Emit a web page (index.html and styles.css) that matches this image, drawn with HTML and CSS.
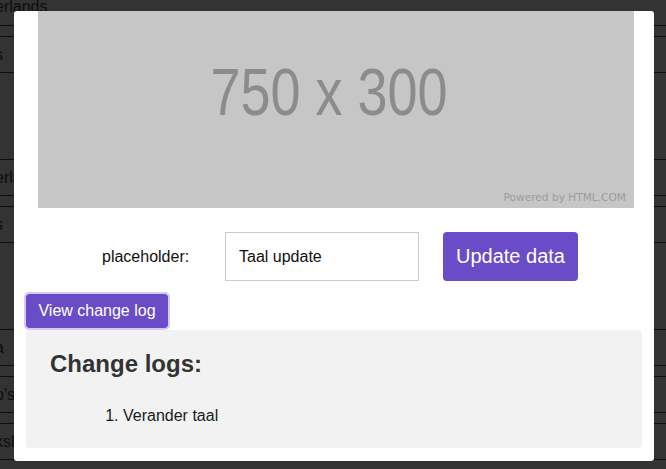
FILE: index.html
```html
<!DOCTYPE html>
<html lang="nl">
<head>
<meta charset="utf-8">
<title>Taal update</title>
<link rel="stylesheet" href="styles.css">
</head>
<body>
<div class="table">
  <div class="row row-text"><span class="cell">erlands</span></div>
  <div class="row row-thin"></div>
  <div class="row row-text"><span class="cell">s</span></div>
  <div class="row row-tall"></div>
  <div class="row row-text"><span class="cell">erlands</span></div>
  <div class="row row-thin"></div>
  <div class="row row-text"><span class="cell">s</span></div>
  <div class="row row-tall"></div>
  <div class="row row-text"><span class="cell">a</span></div>
  <div class="row row-thin"></div>
  <div class="row row-text"><span class="cell">o's</span></div>
  <div class="row row-thin"></div>
  <div class="row row-text"><span class="cell">kslabel</span></div>
</div>

<div class="modal">
  <div class="placeholder-img">
    <div class="img-text">750 x 300</div>
    <div class="img-credit">Powered by HTML.COM</div>
  </div>

  <div class="form-row">
    <label class="form-label" for="taal">placeholder:</label>
    <input class="form-input" id="taal" type="text" value="Taal update">
    <button class="btn-update" type="button">Update data</button>
  </div>

  <button class="btn-log" type="button">View change log</button>
  <div class="log-panel">
    <h2 class="log-title">Change logs:</h2>
    <ol class="log-list">
      <li>Verander taal</li>
    </ol>
  </div>
</div>
</body>
</html>
```

FILE: styles.css
```css
* { box-sizing: border-box; }

html, body {
  margin: 0;
  height: 100%;
  overflow: hidden;
}

body {
  background: #333333;
  font-family: "Liberation Sans", Arial, Helvetica, sans-serif;
  position: relative;
}

.table {
  margin-top: -11px;
}

.row {
  border-bottom: 1px solid #0e0e0e;
  display: flex;
  align-items: center;
}

.row-text { height: 36px; }
.row-thin { height: 11px; }
.row-tall { height: 87px; }

.row:first-child { height: 37px; }

.cell {
  color: #0d0d0d;
  font-size: 16px;
  margin-left: -5px;
  white-space: nowrap;
}

.modal {
  position: absolute;
  left: 14px;
  top: 11px;
  width: 640px;
  height: 450px;
  background: #ffffff;
  border-radius: 3px;
  overflow: hidden;
  display: flex;
  flex-direction: column;
}

.placeholder-img {
  margin: 0 20px 0 24px;
  height: 197px;
  background: #c6c6c6;
  display: flex;
  flex-direction: column;
  align-items: center;
  padding-top: 54px;
}

.img-text {
  font-size: 54px;
  line-height: 54px;
  color: #8c8c8c;
  transform: scaleY(1.22);
  margin-right: 14px;
}

.img-credit {
  margin-top: auto;
  align-self: flex-end;
  font-family: "DejaVu Sans", Verdana, sans-serif;
  font-size: 10.6px;
  line-height: 12px;
  color: #9c9c9c;
  padding: 0 8px 5px 0;
}

.form-row {
  margin-top: 24px;
  height: 49px;
  display: flex;
  align-items: center;
  padding-left: 88px;
}

.form-label {
  width: 88px;
  margin-right: 35px;
  font-size: 16px;
  color: #111;
}

.form-input {
  width: 194px;
  height: 49px;
  margin: 0 24px 0 0;
  border: 1px solid #cccccc;
  padding: 0 13px;
  font-family: "Liberation Sans", Arial, sans-serif;
  font-size: 16px;
  color: #111;
  background: #fff;
  outline: none;
}

.btn-update {
  width: 135px;
  height: 49px;
  border: none;
  border-radius: 4px;
  background: #6a4cc9;
  color: #ffffff;
  font-family: "Liberation Sans", Arial, sans-serif;
  font-size: 20px;
  padding: 0;
}

.btn-log {
  align-self: flex-start;
  margin: 11px 0 0 10px;
  width: 146px;
  height: 38px;
  border: 2px solid #d4caf5;
  border-radius: 5px;
  background: #6a4cc9;
  background-clip: padding-box;
  color: #ffffff;
  font-family: "Liberation Sans", Arial, sans-serif;
  font-size: 16px;
  padding: 0;
}

.log-panel {
  margin: 0 12px;
  background: #f2f2f2;
  border-radius: 4px;
  padding: 20px 24px 23px;
}

.log-title {
  margin: 0;
  font-size: 24px;
  line-height: 28px;
  font-weight: bold;
  color: #333333;
}

.log-list {
  margin: 29px 0 0;
  padding-left: 73px;
  font-size: 16px;
  line-height: 18px;
  color: #1a1a1a;
}
```
